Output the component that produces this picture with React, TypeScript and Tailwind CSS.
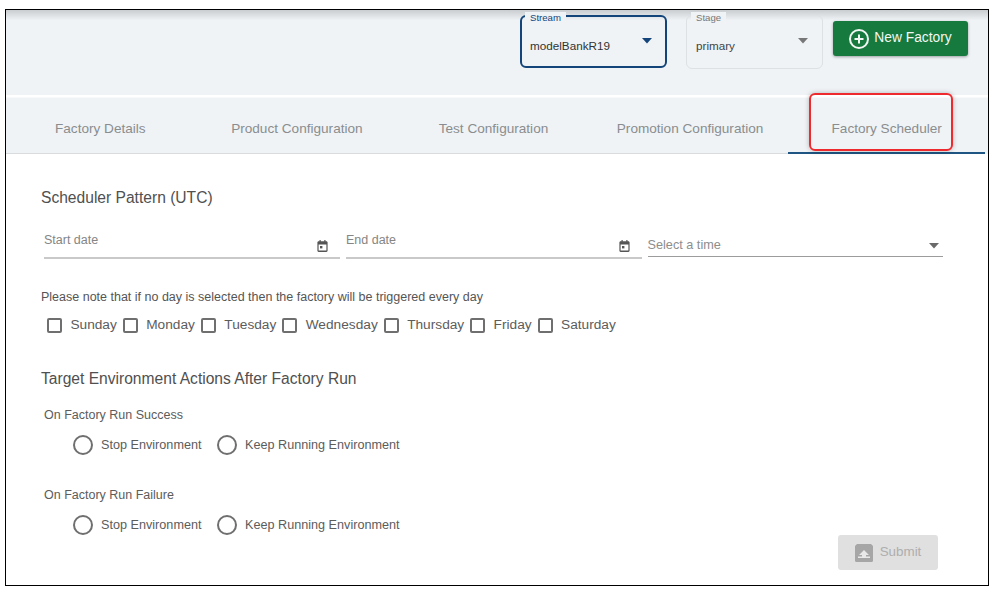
const tabs = [
  "Factory Details",
  "Product Configuration",
  "Test Configuration",
  "Promotion Configuration",
  "Factory Scheduler",
];

const days = ["Sunday", "Monday", "Tuesday", "Wednesday", "Thursday", "Friday", "Saturday"];

function CaretDown({ className }: { className: string }) {
  return (
    <svg width="12" height="6" viewBox="0 0 12 6" className={className}>
      <path d="M1 0h10L6 5.5z" fill="currentColor" />
    </svg>
  );
}

function DateIcon() {
  return (
    <svg width="11" height="12" viewBox="0 0 11 12" className="text-[#555]">
      <path
        d="M2.5 0v1.3H1.6C.8 1.3.4 1.9.4 2.6v8c0 .7.5 1.3 1.2 1.3h7.8c.7 0 1.2-.6 1.2-1.3v-8c0-.7-.5-1.3-1.2-1.3h-.9V0H7.3v1.3H3.7V0zM1.6 4.4h7.8v6.2H1.6z"
        fill="currentColor"
      />
      <rect x="3" y="6" width="2.4" height="2.4" fill="currentColor" />
    </svg>
  );
}

function DateField({ label, className }: { label: string; className: string }) {
  return (
    <div className={`flex h-[36px] items-start justify-between border-b-2 border-[#c9c9c9] ${className}`}>
      <span className="pt-[9px] text-[12.5px] leading-[16px] text-[#858585]">{label}</span>
      <span className="mt-[17px] mr-[12px]">
        <DateIcon />
      </span>
    </div>
  );
}

function RadioRow() {
  return (
    <div className="mt-[10px] ml-[32px] flex h-[24px] items-center text-[12.65px] text-[#5c5c5c]">
      <span className="h-[20px] w-[20px] rounded-full border-2 border-[#6f6f6f]" />
      <span className="ml-[8px]">Stop Environment</span>
      <span className="ml-[15.5px] h-[20px] w-[20px] rounded-full border-2 border-[#6f6f6f]" />
      <span className="ml-[8px]">Keep Running Environment</span>
    </div>
  );
}

export default function App() {
  return (
    <div className="h-[589px] w-[993px] overflow-hidden bg-white pt-[9px] pl-[5px] font-['Liberation_Sans',sans-serif]">
      <div className="relative h-[577px] w-[984px] overflow-hidden border border-black bg-white">
        {/* top bar */}
        <div className="flex h-[85px] items-start justify-end bg-gradient-to-b from-[#c9cdd0] via-[#eff3f6] via-[12%] to-[#eff3f6] pt-[5px] pr-[20px]">
          <div className="relative mr-[19px] h-[53px] w-[147px] rounded-[6px] border-2 border-[#13447a] pt-[20px] pl-[8px] text-[11.7px] text-[#333]">
            <span className="absolute -top-[5px] left-[3px] bg-[#eff3f6] px-[5px] text-[9.6px] leading-[12px] text-[#13447a]">
              Stream
            </span>
            modelBankR19
            <CaretDown className="absolute top-[21px] right-[12px] text-[#13447a]" />
          </div>
          <div className="relative mr-[10px] h-[54px] w-[137px] rounded-[6px] border border-[#dde1e4] pt-[21px] pl-[9px] text-[11.7px] text-[#444]">
            <span className="absolute -top-[4px] left-[4px] bg-[#eff3f6] px-[5px] text-[9.6px] leading-[12px] text-[#777]">
              Stage
            </span>
            primary
            <CaretDown className="absolute top-[22px] right-[13px] text-[#777]" />
          </div>
          <button className="mt-[6px] flex h-[35px] w-[135px] items-center justify-center gap-[5px] rounded-[3px] bg-[#167a3e] text-[13.8px] text-[#f2f7f4] shadow-[0_1px_3px_rgba(0,0,0,0.35)]">
            <svg width="20" height="20" viewBox="0 0 20 20" fill="none" stroke="currentColor" strokeWidth="2">
              <circle cx="10" cy="10" r="9" />
              <path d="M10 5.5v9M5.5 10h9" />
            </svg>
            New Factory
          </button>
        </div>

        {/* tabs */}
        <div className="mt-[2px] -ml-[4px] flex h-[57px] border-t border-[#f7f9fa] bg-[#eff3f6]">
          {tabs.map((tab, i) => (
            <div
              key={tab}
              className={`flex w-[196.6px] shrink-0 items-center justify-center pt-[8px] text-[13.6px] text-[#8a8d8f] ${
                i === 4 ? "border-b-2 border-[#1f5582]" : "border-b border-[#d9dcde]"
              }`}
            >
              {tab}
            </div>
          ))}
        </div>

        {/* red annotation around the active tab */}
        <div className="absolute top-[83px] left-[803px] h-[58px] w-[144px] rounded-[6px] border-2 border-[#ee2a2e] shadow-[0_0_5px_rgba(0,0,0,0.25)]" />

        {/* form */}
        <div className="px-[35px] pt-[34px]">
          <h2 className="text-[15.6px] leading-[20px] text-[#505050]">Scheduler Pattern (UTC)</h2>

          <div className="mt-[15px] ml-[3px] flex items-end">
            <DateField label="Start date" className="w-[296px]" />
            <DateField label="End date" className="ml-[6px] w-[296px]" />
            <div className="mb-[2px] ml-[5.5px] flex h-[28px] w-[295.5px] items-center justify-between border-b border-[#9c9c9c] pt-[6px]">
              <span className="text-[12.7px] text-[#8d8d8d]">Select a time</span>
              <CaretDown className="mr-[3px] text-[#6a6a6a]" />
            </div>
          </div>

          <p className="mt-[30px] text-[12.5px] leading-[16px] text-[#555]">
            Please note that if no day is selected then the factory will be triggered every day
          </p>

          <div className="mt-[10px] ml-[6px] flex h-[20px] items-center gap-[6px] text-[13.7px] text-[#5c5c5c]">
            {days.map((day) => (
              <label key={day} className="flex items-center gap-[8.4px]">
                <span className="h-[15px] w-[15px] rounded-[2px] border-2 border-[#6f6f6f]" />
                {day}
              </label>
            ))}
          </div>

          <h2 className="mt-[34px] text-[15.6px] leading-[20px] text-[#505050]">
            Target Environment Actions After Factory Run
          </h2>

          <p className="mt-[18px] ml-[3px] text-[12.5px] leading-[16px] text-[#5c5c5c]">On Factory Run Success</p>
          <RadioRow />

          <p className="mt-[30px] ml-[3px] text-[12.5px] leading-[16px] text-[#5c5c5c]">On Factory Run Failure</p>
          <RadioRow />
        </div>

        <button className="absolute right-[50px] bottom-[15px] flex h-[35px] w-[100px] items-center justify-center gap-[7px] rounded-[3px] bg-[#e0e0e0] text-[13.4px] text-[#aeaeae]">
          <svg width="18" height="18" viewBox="0 0 18 18">
            <path d="M2 0h14l2 2v14.5a1.5 1.5 0 0 1-1.5 1.5h-15A1.5 1.5 0 0 1 0 16.5V2z" fill="#a6a6a6" />
            <path d="M9 6l5 5h-3v1.5h4V14H3v-1.5h4V11H4z" fill="#e9e9e9" />
          </svg>
          Submit
        </button>
      </div>
    </div>
  );
}
